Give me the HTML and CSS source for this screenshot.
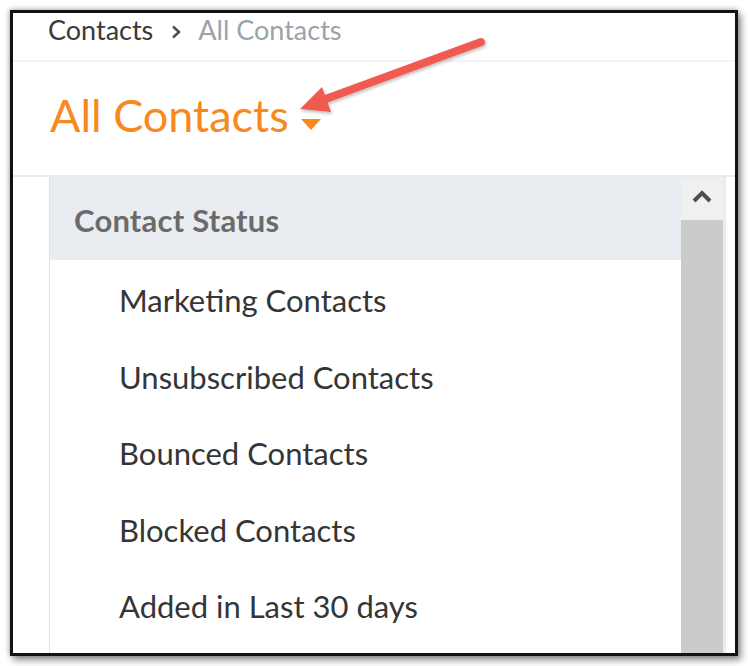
FILE: index.html
```html
<!DOCTYPE html>
<html>
<head>
<meta charset="utf-8">
<link rel="stylesheet" href="styles.css">
</head>
<body>
<div class="frame">
  <div class="crumbs">
    <span class="crumb-root">Contacts</span>
    <svg class="crumb-sep" width="12" height="16" viewBox="0 0 12 16"><path d="M3 2.5 L9 8 L3 13.5" fill="none" stroke="#4a4a4a" stroke-width="2.4"/></svg>
    <span class="crumb-current">All Contacts</span>
  </div>
  <div class="title-row">
    <h1 class="title">All Contacts</h1>
    <span class="caret"></span>
  </div>
  <div class="lower">
    <div class="panel">
      <div class="list">
        <div class="list-head">Contact Status</div>
        <div class="list-item">Marketing Contacts</div>
        <div class="list-item">Unsubscribed Contacts</div>
        <div class="list-item">Bounced Contacts</div>
        <div class="list-item">Blocked Contacts</div>
        <div class="list-item">Added in Last 30 days</div>
      </div>
      <div class="scrollbar">
        <div class="scroll-btn">
          <svg width="24" height="16" viewBox="0 0 24 16"><path d="M4 13 L12 5 L20 13" fill="none" stroke="#4d4d4d" stroke-width="4"/></svg>
        </div>
        <div class="scroll-thumb"></div>
      </div>
    </div>
  </div>
  <svg class="annot" width="748" height="666" viewBox="0 0 748 666">
    <defs>
      <filter id="sh" x="-20%" y="-20%" width="140%" height="140%">
        <feDropShadow dx="1" dy="2" stdDeviation="1.5" flood-color="#000" flood-opacity="0.25"/>
      </filter>
    </defs>
    <g filter="url(#sh)">
      <line x1="481" y1="42" x2="320" y2="101" stroke="#f05a50" stroke-width="8" stroke-linecap="round"/>
      <polygon points="300,109 322,87 331,112" fill="#f05a50"/>
    </g>
  </svg>
</div>
</body>
</html>
```
FILE: styles.css
```css
* { box-sizing: border-box; }
html, body { margin: 0; padding: 0; background: #fff; }
body {
  font-family: Lato, "Open Sans", sans-serif;
  width: 748px;
  height: 666px;
  overflow: hidden;
  padding: 10px 0 0 10px;
}
.frame {
  position: relative;
  width: 728px;
  height: 646px;
  border: 3px solid #121212;
  background: #fff;
  overflow: hidden;
  box-shadow: 3px 4px 7px rgba(0,0,0,0.45), -1px -1px 5px rgba(0,0,0,0.25);
  display: flex;
  flex-direction: column;
}
.crumbs {
  height: 49px;
  flex: none;
  display: flex;
  align-items: center;
  padding-left: 35px;
  padding-bottom: 14px;
  font-size: 27px;
  border-bottom: 2px solid #f2f5f7;
}
.crumb-root { color: #3a3a3a; }
.crumb-sep { margin: 4px 16px 0 17px; }
.crumb-current { color: #9aa3ad; }
.title-row {
  height: 115px;
  flex: none;
  display: flex;
  align-items: center;
  padding-left: 37px;
  padding-bottom: 6px;
  border-bottom: 2px solid #e8ecef;
}
.title {
  margin: 0;
  font-weight: 400;
  font-size: 45px;
  color: #f7891f;
  line-height: 1;
}
.caret {
  width: 0;
  height: 0;
  margin: 18px 0 0 12px;
  border-left: 10px solid transparent;
  border-right: 10px solid transparent;
  border-top: 11px solid #f7891f;
}
.lower {
  flex: 1;
  padding-left: 36px;
  min-height: 0;
}
.panel {
  width: 677px;
  height: 100%;
  display: flex;
  border-left: 1px solid #e2e2e2;
  border-right: 3px solid #ececec;
  overflow: hidden;
}
.list {
  flex: 1;
  min-width: 0;
}
.list-head {
  height: 83px;
  display: flex;
  align-items: center;
  padding-left: 24px;
  padding-top: 2px;
  background: #e9edf1;
  color: #6b6b6b;
  font-weight: 700;
  font-size: 31px;
  letter-spacing: 0.2px;
}
.list-item {
  height: 76.5px;
  display: flex;
  align-items: center;
  padding-left: 69px;
  padding-top: 4px;
  color: #353535;
  font-size: 31px;
}
.scrollbar {
  width: 42px;
  flex: none;
  display: flex;
  flex-direction: column;
}
.scroll-btn {
  height: 43px;
  background: #f0f0f0;
  display: flex;
  justify-content: center;
  padding-top: 11px;
}
.scroll-thumb {
  flex: 1;
  background: #cbcbcb;
}
.annot {
  position: absolute;
  left: -13px;
  top: -13px;
  pointer-events: none;
}
```
